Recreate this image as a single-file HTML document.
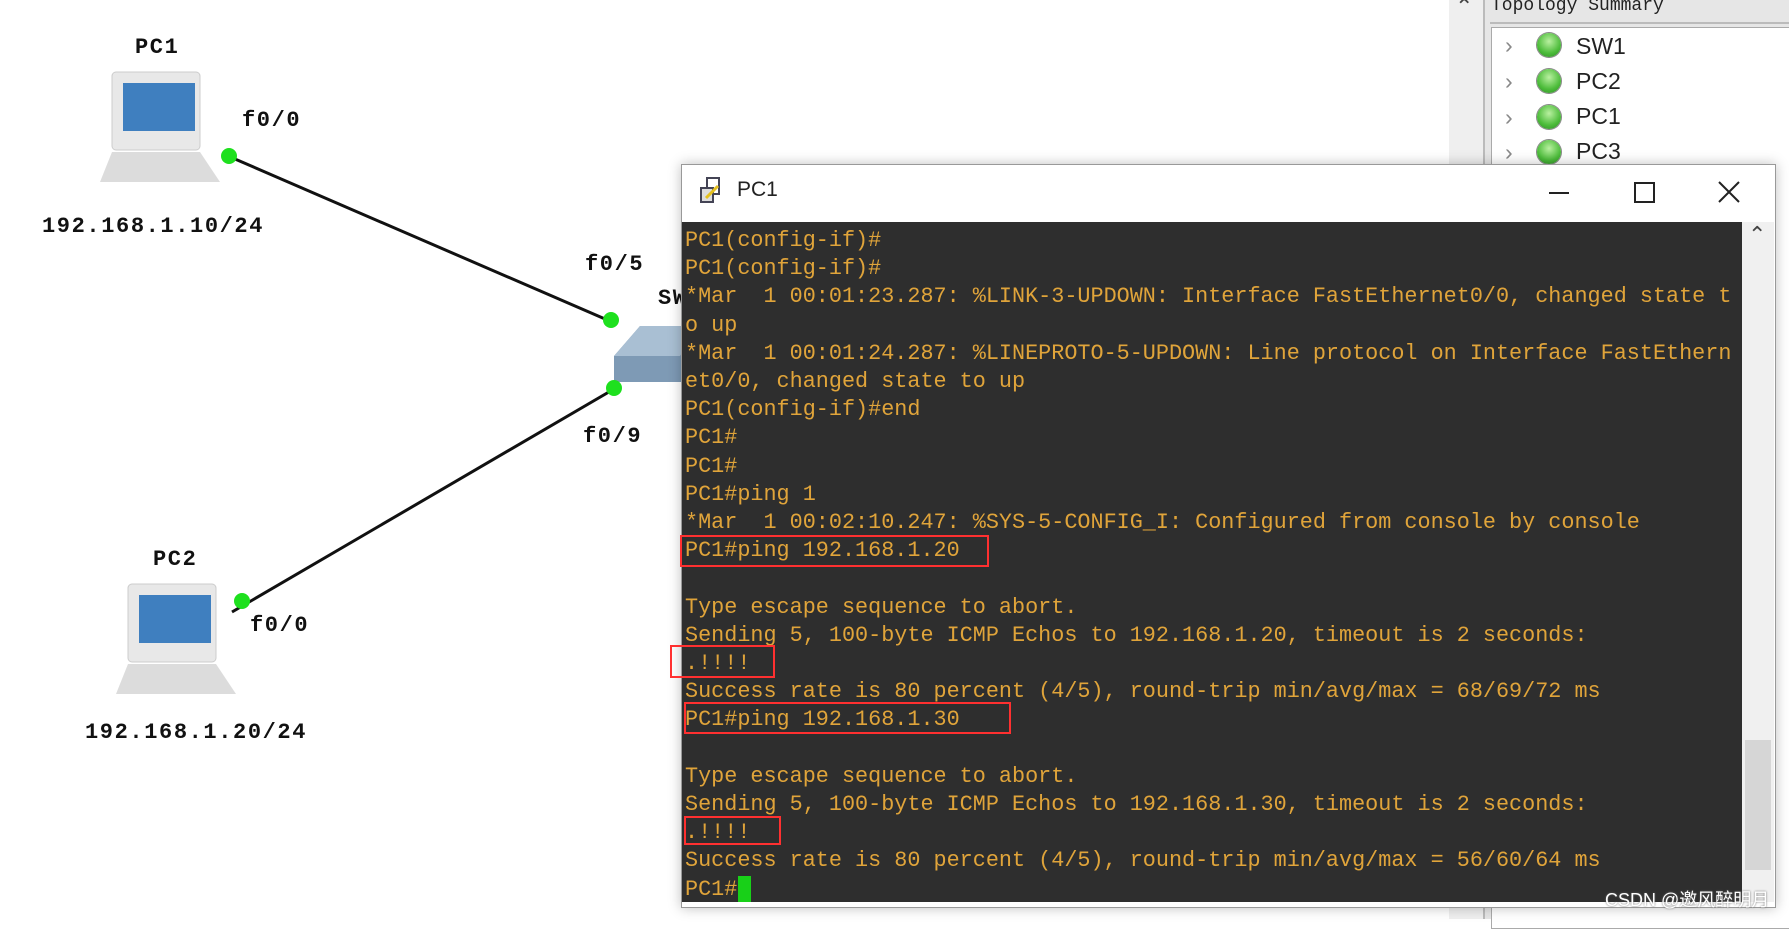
<!DOCTYPE html>
<html><head><meta charset="utf-8"><style>
body{margin:0;width:1789px;height:919px;background:#fff;position:relative;overflow:hidden;font-family:"Liberation Sans",sans-serif}
.a{position:absolute}
.lbl{position:absolute;font-family:"Liberation Mono",monospace;font-weight:bold;font-size:22px;letter-spacing:1.6px;color:#111;white-space:nowrap}
.dot{position:absolute;width:16px;height:16px;border-radius:50%;background:#1ee01e}
.term{position:absolute;left:682px;top:222px;width:1060px;height:680px;background:#2e2e2e}
.term pre{margin:0;position:absolute;left:3px;top:5px;font-family:"Liberation Mono",monospace;font-size:21.8px;line-height:28.2px;color:#e0a43a;letter-spacing:0}
.rb{position:absolute;border:2.5px solid #ff3030}
.tree{position:absolute;font-size:23px;color:#222}
.ball{position:absolute;width:24px;height:24px;border-radius:50%;background:radial-gradient(circle at 50% 35%,#b9f0a0,#4cbc3a 60%,#2f8a28);box-shadow:0 0 0 1px #888}
</style></head><body>
<svg class="a" style="left:0;top:0" width="700" height="919">
<line x1="228" y1="156" x2="612" y2="322" stroke="#111" stroke-width="3"/>
<line x1="614" y1="389" x2="232" y2="612" stroke="#111" stroke-width="3"/>
<rect x="112" y="72" width="88" height="78" rx="4" fill="#e8e8e8" stroke="#ccc"/>
<rect x="123" y="83" width="72" height="48" fill="#3f7fbf"/>
<path d="M112 152 L200 152 L220 182 L100 182 Z" fill="#dcdcdc"/>
<rect x="128" y="584" width="88" height="78" rx="4" fill="#e8e8e8" stroke="#ccc"/>
<rect x="139" y="595" width="72" height="48" fill="#3f7fbf"/>
<path d="M128 664 L216 664 L236 694 L116 694 Z" fill="#dcdcdc"/>
<path d="M614 356 L640 326 L700 326 L700 382 L614 382 Z" fill="#7e9ab5"/>
<path d="M614 356 L640 326 L700 326 L680 356 Z" fill="#a9bfd3"/>
</svg>
<div class="dot" style="left:221px;top:148px"></div>
<div class="dot" style="left:603px;top:312px"></div>
<div class="dot" style="left:606px;top:380px"></div>
<div class="dot" style="left:234px;top:593px"></div>
<div class="lbl" style="left:135px;top:35px">PC1</div>
<div class="lbl" style="left:242px;top:108px">f0/0</div>
<div class="lbl" style="left:42px;top:214px">192.168.1.10/24</div>
<div class="lbl" style="left:585px;top:252px">f0/5</div>
<div class="lbl" style="left:658px;top:286px">SW</div>
<div class="lbl" style="left:583px;top:424px">f0/9</div>
<div class="lbl" style="left:153px;top:547px">PC2</div>
<div class="lbl" style="left:250px;top:613px">f0/0</div>
<div class="lbl" style="left:85px;top:720px">192.168.1.20/24</div>
<div class="a" style="left:1449px;top:0;width:34px;height:919px;background:#efefef"></div>
<div class="a" style="left:1455px;top:-6px;font-size:22px;color:#444">&#8963;</div>
<div class="a" style="left:1483px;top:0;width:306px;height:919px;background:#e6e6e6;border-left:2px solid #bbb"></div>
<div class="a" style="left:1491px;top:-4px;font-family:'Liberation Mono',monospace;font-size:18px;color:#222">Topology Summary</div>
<div class="a" style="left:1490px;top:22px;width:299px;height:2px;background:#bbb"></div>
<div class="a" style="left:1491px;top:27px;width:298px;height:900px;background:#fff;border:1px solid #aaa"></div>
<div class="tree" style="left:1505px;top:32px;color:#888">&#8250;</div><div class="ball" style="left:1537px;top:33px"></div><div class="tree" style="left:1576px;top:33px">SW1</div>
<div class="tree" style="left:1505px;top:68px;color:#888">&#8250;</div><div class="ball" style="left:1537px;top:69px"></div><div class="tree" style="left:1576px;top:68px">PC2</div>
<div class="tree" style="left:1505px;top:104px;color:#888">&#8250;</div><div class="ball" style="left:1537px;top:105px"></div><div class="tree" style="left:1576px;top:103px">PC1</div>
<div class="tree" style="left:1505px;top:139px;color:#888">&#8250;</div><div class="ball" style="left:1537px;top:140px"></div><div class="tree" style="left:1576px;top:138px">PC3</div>
<div class="a" style="left:681px;top:164px;width:1093px;height:742px;background:#fff;border:1px solid #999;box-shadow:0 0 12px rgba(0,0,0,.25)"></div>
<svg class="a" style="left:698px;top:176px" width="30" height="30"><rect x="9" y="2" width="12" height="16" fill="#fff" stroke="#445" stroke-width="2"/><rect x="3" y="12" width="12" height="14" fill="#ddd" stroke="#445" stroke-width="2"/><line x1="8" y1="22" x2="20" y2="10" stroke="#e4c020" stroke-width="3"/></svg>
<div class="a" style="left:737px;top:178px;font-size:21px;color:#222">PC1</div>
<div class="a" style="left:1549px;top:192px;width:20px;height:2px;background:#222"></div>
<div class="a" style="left:1634px;top:182px;width:17px;height:17px;border:2px solid #222"></div>
<svg class="a" style="left:1717px;top:180px" width="24" height="24"><path d="M2 2L22 22M22 2L2 22" stroke="#222" stroke-width="2"/></svg>
<div class="term"><pre>PC1(config-if)#
PC1(config-if)#
*Mar  1 00:01:23.287: %LINK-3-UPDOWN: Interface FastEthernet0/0, changed state t
o up
*Mar  1 00:01:24.287: %LINEPROTO-5-UPDOWN: Line protocol on Interface FastEthern
et0/0, changed state to up
PC1(config-if)#end
PC1#
PC1#
PC1#ping 1
*Mar  1 00:02:10.247: %SYS-5-CONFIG_I: Configured from console by console
PC1#ping 192.168.1.20

Type escape sequence to abort.
Sending 5, 100-byte ICMP Echos to 192.168.1.20, timeout is 2 seconds:
.!!!!
Success rate is 80 percent (4/5), round-trip min/avg/max = 68/69/72 ms
PC1#ping 192.168.1.30

Type escape sequence to abort.
Sending 5, 100-byte ICMP Echos to 192.168.1.30, timeout is 2 seconds:
.!!!!
Success rate is 80 percent (4/5), round-trip min/avg/max = 56/60/64 ms
PC1#</pre><div class="a" style="left:56px;top:654px;width:13px;height:26px;background:#18d018"></div></div>
<div class="a" style="left:1742px;top:222px;width:32px;height:680px;background:#f0f0f0"></div>
<div class="a" style="left:1745px;top:740px;width:26px;height:130px;background:#d6d6d6"></div>
<div class="a" style="left:1748px;top:222px;font-size:22px;color:#444">&#8963;</div>
<div class="rb" style="left:680px;top:535px;width:305px;height:28px"></div>
<div class="rb" style="left:670px;top:645px;width:101px;height:29px"></div>
<div class="rb" style="left:684px;top:702px;width:323px;height:28px"></div>
<div class="rb" style="left:684px;top:816px;width:93px;height:25px"></div>
<div class="a" style="left:1605px;top:886px;font-family:'Liberation Sans','Noto Sans CJK SC',sans-serif;font-size:18px;color:#fff;text-shadow:0 0 2px #666">CSDN @邀风醉明月</div>
</body></html>
